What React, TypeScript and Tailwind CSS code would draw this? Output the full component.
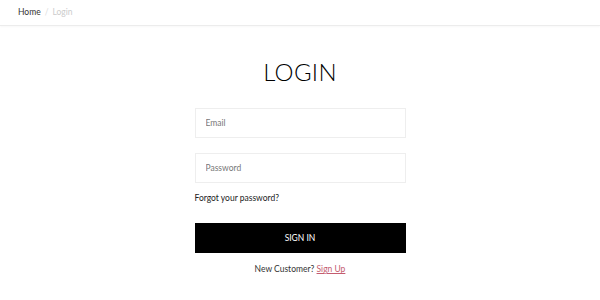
export default function App() {
  return (
    <div className="min-h-[300px] w-[600px] bg-white text-black" style={{ fontFamily: 'Lato, "Noto Sans", sans-serif' }}>
      <div className="flex h-[26px] items-center border-b border-[#ececec] px-[18px] text-[8.5px] shadow-[0_1px_2px_rgba(0,0,0,0.03)]">
        <span className="text-[#333]">Home</span>
        <span className="mx-[4px] text-[#ddd]">/</span>
        <span className="text-[#ccc]">Login</span>
      </div>
      <div className="flex flex-col items-center">
        <h1 className="mt-[29px] text-[24px] font-light leading-[34px] tracking-[0.3px]">LOGIN</h1>
        <div className="mt-[19px] flex w-[211px] flex-col">
          <input
            placeholder="Email"
            className="h-[30px] border border-[#eeeeee] px-[10px] text-[8.5px] text-[#555] placeholder:text-[#777] outline-none"
          />
          <input
            placeholder="Password"
            type="password"
            className="mt-[15px] h-[30px] border border-[#eeeeee] px-[10px] text-[8.5px] text-[#555] placeholder:text-[#777] outline-none"
          />
          <a className="mt-[9px] text-[8.5px] leading-[12px] text-[#222]">Forgot your password?</a>
          <button className="mt-[19px] h-[30px] bg-black text-[8.5px] text-white">SIGN IN</button>
          <p className="mt-[10px] text-center text-[8.5px] text-[#333]">
            New Customer? <a className="text-[#c45c6f] underline">Sign Up</a>
          </p>
        </div>
      </div>
    </div>
  );
}
